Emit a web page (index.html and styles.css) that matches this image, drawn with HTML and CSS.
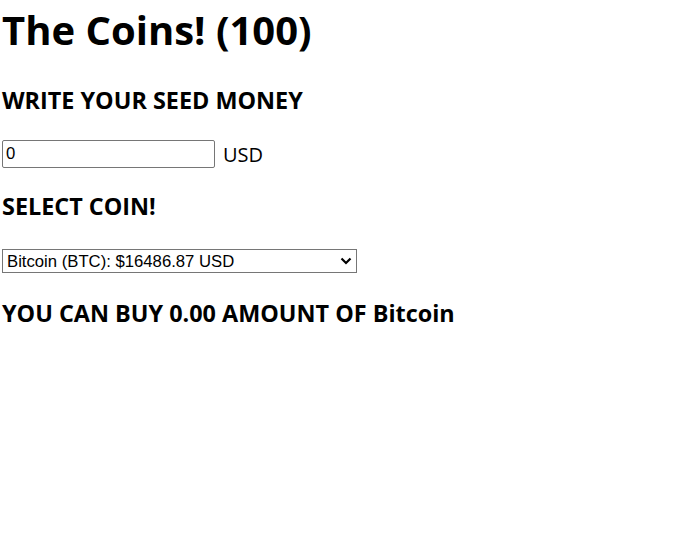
FILE: index.html
```html
<!DOCTYPE html>
<html lang="en">
<head>
  <meta charset="UTF-8" />
  <title>The Coins!</title>
  <meta name="viewport" content="width=device-width, initial-scale=1.0" />
  <link rel="stylesheet" href="styles.css">
</head>
<body>
  <h1>The Coins! (100)</h1>

  <h3>WRITE YOUR SEED MONEY</h3>
  <div class="money-row">
    <input type="number" id="seedInput" value="0">
    <span>USD</span>
  </div>

  <h3>SELECT COIN!</h3>
  <div class="select-wrap">
    <select id="coinSelect">
      <option>Bitcoin (BTC): $16486.87 USD</option>
      <option>Ethereum (ETH): $1203.55 USD</option>
      <option>Tether (USDT): $1.00 USD</option>
    </select>
    <svg class="chevron" width="12" height="8" viewBox="0 0 12 8">
      <path d="M1.5 1.5 L6 6 L10.5 1.5" fill="none" stroke="#000" stroke-width="2.2"/>
    </svg>
  </div>

  <h3 id="result">YOU CAN BUY 0.00 AMOUNT OF Bitcoin</h3>
</body>
</html>
```

FILE: styles.css
```css
body {
  margin: 0;
  padding: 2px;
  font-family: 'Open Sans', 'Noto Sans CJK KR', sans-serif;
  font-size: 20px;
  color: #000;
  background: #fff;
}

h1 {
  font-size: 40px;
  margin: 0 0 27px 0;
}

h3 {
  font-size: 23.4px;
  margin: 0 0 24px 0;
}

.money-row {
  display: flex;
  align-items: center;
  gap: 8px;
  margin-bottom: 22px;
}

input[type="number"] {
  width: 213px;
  height: 28px;
  box-sizing: border-box;
  font-family: 'Liberation Sans', Arial, sans-serif;
  font-size: 16.7px;
  padding: 1px 3px;
  border: 1px solid #767676;
  border-radius: 2px;
}

input[type="number"]::-webkit-inner-spin-button {
  display: none;
}

.select-wrap {
  position: relative;
  width: 355px;
  padding-top: 3px;
  margin-bottom: 24px;
}

#coinSelect {
  display: block;
  width: 355px;
  height: 24px;
  box-sizing: border-box;
  appearance: none;
  background: #fff;
  color: #000;
  font-family: 'Liberation Sans', Arial, sans-serif;
  font-size: 16.7px;
  padding: 0 4px;
  border: 1px solid #767676;
  border-radius: 0;
}

.chevron {
  position: absolute;
  right: 5px;
  top: 11px;
  pointer-events: none;
}
```
